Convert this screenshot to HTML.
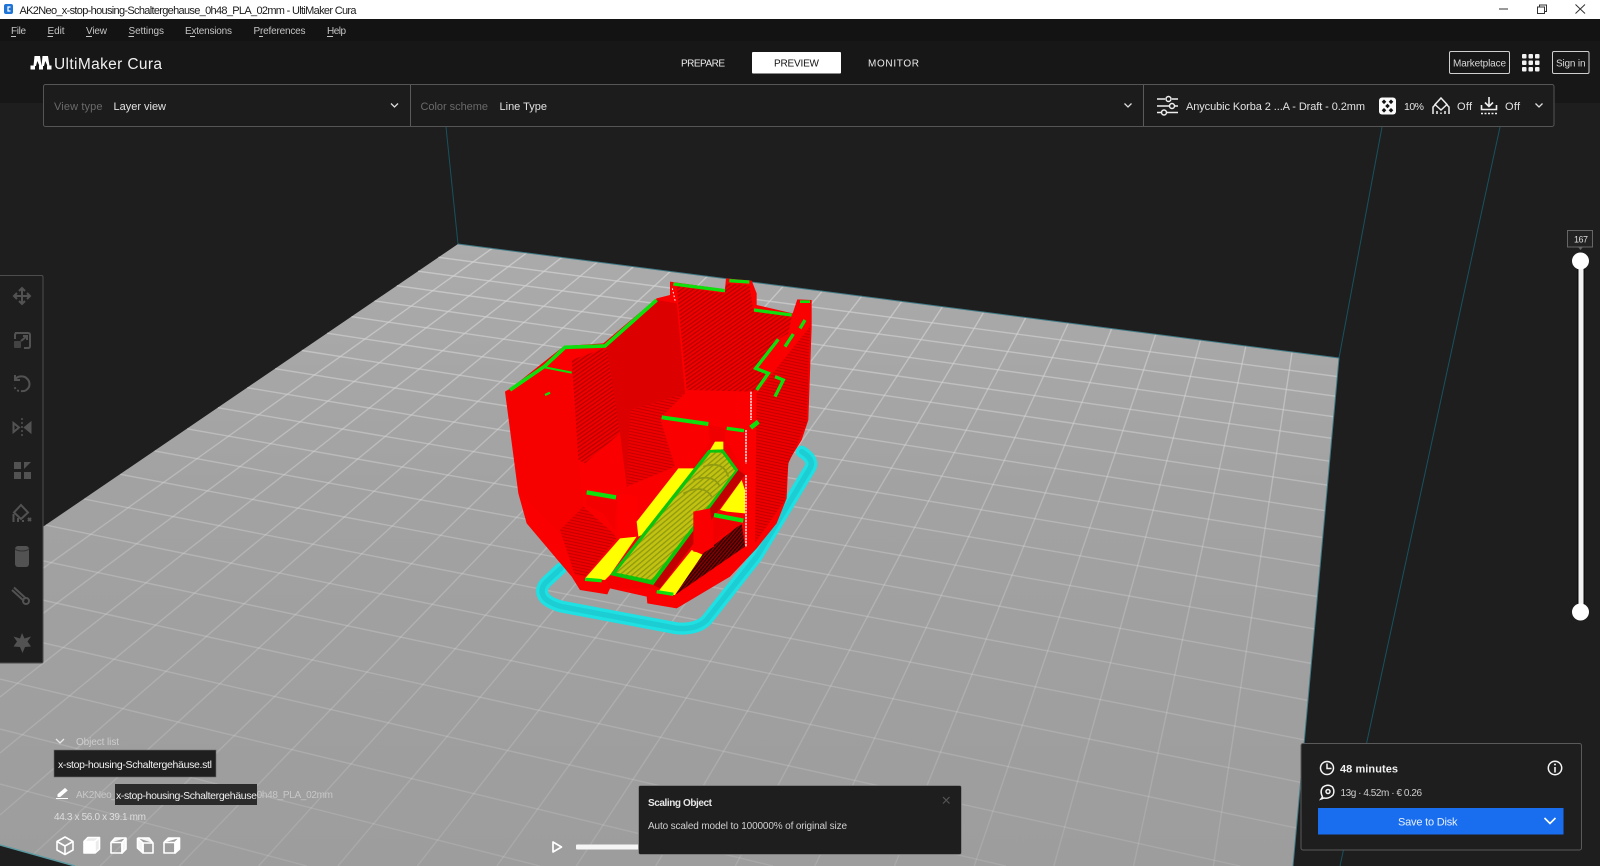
<!DOCTYPE html>
<html lang="en">
<head>
<meta charset="utf-8">
<title>UltiMaker Cura</title>
<style>
html,body{margin:0;padding:0;background:#1e1e1e;width:1600px;height:866px;overflow:hidden}
#wrap{position:absolute;left:0;top:0;width:1600px;height:866px;overflow:hidden;background:#1e1e1e}
#wrap svg{position:absolute;left:0;top:0;display:block}
text{font-family:"Liberation Sans",Arial,sans-serif;}
</style>
</head>
<body>
<div id="wrap">
<svg width="1600" height="866" viewBox="0 0 1600 866" xmlns="http://www.w3.org/2000/svg">
<defs>
<linearGradient id="pl" gradientUnits="userSpaceOnUse" x1="0" y1="244" x2="0" y2="866">
<stop offset="0" stop-color="#ababab"/><stop offset=".4" stop-color="#a2a2a2"/><stop offset="1" stop-color="#9d9d9d"/></linearGradient>
<linearGradient id="gr" gradientUnits="userSpaceOnUse" x1="0" y1="244" x2="0" y2="866">
<stop offset="0" stop-color="#d2d2d2" stop-opacity=".75"/><stop offset=".5" stop-color="#d2d2d2" stop-opacity=".38"/><stop offset="1" stop-color="#d2d2d2" stop-opacity=".2"/></linearGradient>
<pattern id="h1" width="10" height="10" patternUnits="userSpaceOnUse" patternTransform="rotate(-35)">
<rect width="10" height="10" fill="#f20000"/><rect width="10" height="4" fill="#b80000"/></pattern>
<pattern id="h2" width="9" height="9" patternUnits="userSpaceOnUse" patternTransform="rotate(12)">
<rect width="9" height="9" fill="#ee0000"/><rect width="9" height="3" fill="#c40000"/></pattern>
<pattern id="h3" width="8" height="8" patternUnits="userSpaceOnUse" patternTransform="rotate(-50)">
<rect width="8" height="8" fill="#8a0000"/><rect width="8" height="4" fill="#2a0000"/></pattern>
<pattern id="h4" width="12" height="12" patternUnits="userSpaceOnUse" patternTransform="rotate(-40)">
<rect width="12" height="12" fill="#c2c210"/><rect width="12" height="4" fill="#8f9a10"/></pattern>
</defs>

<!-- plate -->
<polygon points="458,244 1339,358 1293,866 75,866 0,845 0,556" fill="url(#pl)"/>
<g fill="none" stroke="url(#gr)" stroke-width="1.400">
<path d="M492.100 248.400L0 599M526.700 252.900L0 645.500M561.800 257.400L0 697M597.400 262L0 753M633.500 266.700L0 815M670.200 271.500L33.400 854.400M707.400 276.300L100 866M745.100 281.100L179.300 866M783.400 286.100L258.600 866M822.300 291.100L337.900 866M861.700 296.200L417.300 866M901.800 301.400L496.800 866M942.500 306.700L576.300 866M983.800 312L655.700 866M1025.800 317.500L735.300 866M1068.400 323L814.900 866M1111.700 328.600L894.500 866M1155.800 334.300L974.200 866M1200.500 340.100L1053.900 866M1245.900 345.900L1133.600 866M1292.100 351.900L1213.400 866"/>
<path d="M438.400 257.300L1337.400 376.600M418.100 271.200L1335.600 396.200M396.800 285.700L1333.700 416.700M374.600 300.900L1331.800 438.300M351.500 316.700L1329.700 461.200M327.200 333.200L1327.600 485.200M301.800 350.500L1325.300 510.700M275.200 368.700L1322.800 537.600M247.300 387.700L1320.200 566.200M217.900 407.700L1317.500 596.600M187.100 428.800L1314.600 628.900M154.600 450.900L1311.500 663.500M120.300 474.300L1308.100 700.400M84.100 499L1304.600 739.900M45.800 525.100L1300.800 782.400M5.300 552.800L1296.600 828.100M0 590.600L1240 866M0 632.800L1006 866M0 679L773 866M0 729L540 866M0 784L307 866"/>
</g>

<!-- build volume lines -->
<g stroke="#17525f" stroke-width="1" fill="none">
<path d="M446 127L458 244"/><path d="M1382 127L1339 358"/><path d="M1500 127L1340 866"/>
<path d="M458 244L1339 358" stroke="#3f7a86"/><path d="M1339 358L1293 866" stroke="#3f7a86"/>
<path d="M0 845L75 866" stroke="#5d9aa2" stroke-width="1.500"/>
</g>

<!-- model -->
<g transform="translate(490 260) scale(.33333)">
<g fill="none" stroke-linecap="round" stroke-linejoin="round">
<path d="M213 925L170 965Q145 990 165 1015Q180 1030 215 1040L560 1105Q620 1110 650 1080L800 890L960 625Q975 600 935 575" stroke="#1fe0e2" stroke-width="36"/>
<path d="M213 925L170 965Q145 990 165 1015Q180 1030 215 1040L560 1105Q620 1110 650 1080L800 890L960 625Q975 600 935 575" stroke="#18b8c0" stroke-width="16" opacity=".45"/>
</g>
<polygon fill="#fa0000" points="45,395 62,385 222,258 340,250 500,115 540,105 540,65 705,88 708,55 785,62 800,100 800,135 908,160 922,118 965,120 965,200 955,480 935,540 895,605 890,715 860,790 800,865 720,950 560,1045 472,1030 470,1010 360,985 352,1003 270,990 245,950 110,790 85,700"/>
<polygon fill="#dc0000" points="345,262 500,120 560,130 585,400 515,470 555,620 410,680 390,520"/>
<polygon fill="url(#h2)" points="420,450 585,400 515,470 555,620 410,680"/>
<polygon fill="url(#h1)" points="245,300 350,262 390,520 285,610 265,600"/>
<polygon fill="url(#h1)" points="560,78 700,100 710,70 778,75 790,150 905,170 895,220 860,240 800,320 840,340 790,395 590,390 565,130"/>
<polygon fill="url(#h2)" points="800,400 960,200 950,490 895,610 885,720 795,850"/>
<polygon fill="#f60000" points="50,400 160,325 240,345 265,600 280,740 210,820 90,700"/>
<polygon fill="#fa0000" points="285,610 390,520 410,680 375,815 280,740"/>
<polygon fill="url(#h2)" points="210,810 280,740 370,820 380,835 285,950 255,945"/>
<polygon fill="#fa0000" points="510,475 655,495 660,545 600,625 555,620"/>
<polygon fill="#fa0000" points="705,505 770,510 768,650 745,625 705,545"/>
<polygon fill="#f00000" points="655,495 705,505 705,545 660,545"/>
<polygon fill="#f40000" points="290,695 380,715 375,815 340,760 290,735"/>
<polygon fill="#ff0000" points="385,700 440,710 442,825 385,838"/>
<polygon fill="#f40000" points="440,830 605,630 660,545 710,545 765,640 510,985 360,985 345,960"/>
<polygon fill="#ffff00" points="285,955 390,835 440,830 360,945 345,960"/>
<polygon fill="#ffff00" points="440,785 565,625 612,625 455,825 445,830"/>
<polygon fill="#ffff00" points="660,570 675,545 700,545 700,568"/>
<polygon fill="#0bc40b" points="360,945 655,570 700,568 745,630 490,975"/>
<polygon fill="url(#h4)" points="378,938 662,578 695,578 735,632 485,960"/>
<path d="M640 620Q700 600 715 650M610 660Q670 640 690 680M580 700Q640 670 665 710" fill="none" stroke="#8f9a10" stroke-width="5"/>
<polygon fill="#c20000" points="490,975 745,630 765,645 510,985"/>
<polygon fill="#ffff00" points="500,1000 605,870 640,885 555,1005"/>
<polygon fill="#ffff00" points="690,750 755,660 765,690 765,760 710,755"/>
<polygon fill="url(#h3)" points="640,880 755,790 765,860 555,1005"/>
<polygon fill="#fa0000" points="610,755 660,745 672,860 640,878 610,875"/>
<polygon fill="#f00000" points="670,770 760,790 690,830 672,850"/>
<g fill="none" stroke="#0ee00e" stroke-linecap="butt" stroke-linejoin="miter">
<path stroke-width="11" d="M60 390L165 318L225 262L345 258L500 120"/>
<path stroke-width="6" d="M165 322L245 338"/>
<path stroke-width="7" d="M165 405L180 398"/>
<path stroke-width="10" d="M550 72L705 92"/>
<path stroke-width="10" d="M718 62L778 66"/>
<path stroke-width="10" d="M792 150L905 165"/>
<path stroke-width="8" d="M930 125L960 125"/>
<path stroke-width="10" d="M930 205L945 180"/>
<path stroke-width="10" d="M885 260L910 222"/>
<path stroke-width="10" d="M865 238L797 325L835 340L800 390"/>
<path stroke-width="10" d="M855 350L880 360L855 410"/>
<path stroke-width="12" d="M515 472L655 492"/>
<path stroke-width="10" d="M710 505L762 512"/>
<path stroke-width="14" d="M782 503L805 485"/>
<path stroke-width="13" d="M290 697L378 712"/>
<path stroke-width="13" d="M672 765L760 782"/>
<path stroke-width="10" d="M285 958L335 962"/>
<path stroke-width="10" d="M500 995L550 1003"/>
</g>
<g fill="none" stroke="#fff" stroke-width="4" stroke-dasharray="7 2">
<path d="M783 395V480"/><path d="M768 510V610"/><path d="M768 645V860"/><path d="M547 85L556 125" stroke-width="3" stroke-dasharray="5 6"/>
</g>
</g>

<!-- top chrome -->
<rect x="0" y="19" width="1600" height="22" fill="#131313"/>
<rect x="0" y="41" width="1600" height="62" fill="#171717"/>
<rect x="0" y="0" width="1600" height="19" fill="#fff"/>
<rect x="4" y="4" width="9" height="10" rx="2" fill="#1f74d8"/>
<path d="M10.500 7H8V11H10.500" fill="none" stroke="#fff" stroke-width="1.300"/>
<text x="19.500" y="14" font-size="11" fill="#1a1a1a" textLength="337">AK2Neo_x-stop-housing-Schaltergehause_0h48_PLA_02mm - UltiMaker Cura</text>
<g fill="none" stroke="#333" stroke-width="1">
<path d="M1499 9H1508"/>
<rect x="1537.500" y="7" width="7" height="6.500"/><path d="M1539.500 7V5H1546.500V11.500H1544.500"/>
<path d="M1575.500 4.500L1585 13.500M1585 4.500L1575.500 13.500"/>
</g>

<!-- menu -->
<g font-size="10" fill="#c4c4c4">
<text x="11" y="34" textLength="15">File</text>
<text x="47.500" y="34" textLength="17">Edit</text>
<text x="86" y="34" textLength="21">View</text>
<text x="128.500" y="34" textLength="35.500">Settings</text>
<text x="185" y="34" textLength="47">Extensions</text>
<text x="253.500" y="34" textLength="52">Preferences</text>
<text x="327" y="34" textLength="19">Help</text>
</g>
<g stroke="#c4c4c4" stroke-width="1"><path d="M11 36.500H16M47.500 36.500H53M86 36.500H92M128.500 36.500H134M190 36.500H195M259 36.500H263M327 36.500H333"/></g>

<!-- logo -->
<g fill="#fff">
<rect x="30.500" y="65.500" width="4.500" height="4"/>
<rect x="39" y="65.500" width="4" height="4"/>
<rect x="47" y="65.500" width="4.500" height="4"/>
<path d="M34.500 56H40L41.500 66H39.500L37.300 61L36 66H33.500Z"/>
<path d="M42.500 56H48L49.500 66H47.500L45.300 61L44 66H41.500Z"/>
</g>
<text x="54" y="69" font-size="15.500" fill="#f0f0f0" textLength="108">UltiMaker Cura</text>

<!-- tabs -->
<text x="681" y="66.500" font-size="10" fill="#ececec" textLength="44">PREPARE</text>
<rect x="752" y="52" width="89" height="21.500" rx="1" fill="#fff"/>
<text x="774" y="66.500" font-size="10" fill="#111" textLength="45">PREVIEW</text>
<text x="868" y="66.500" font-size="10" fill="#ececec" textLength="51">MONITOR</text>

<!-- right top -->
<rect x="1449.500" y="51.500" width="60" height="22" rx="1.500" fill="none" stroke="#cfcfcf"/>
<text x="1453" y="66.500" font-size="10" fill="#d8d8d8" textLength="53">Marketplace</text>
<g fill="#f2f2f2">
<rect x="1522" y="54" width="4.500" height="4.500" rx="1"/><rect x="1528.500" y="54" width="4.500" height="4.500" rx="1"/><rect x="1535" y="54" width="4.500" height="4.500" rx="1"/>
<rect x="1522" y="60.500" width="4.500" height="4.500" rx="1"/><rect x="1528.500" y="60.500" width="4.500" height="4.500" rx="1"/><rect x="1535" y="60.500" width="4.500" height="4.500" rx="1"/>
<rect x="1522" y="67" width="4.500" height="4.500" rx="1"/><rect x="1528.500" y="67" width="4.500" height="4.500" rx="1"/><rect x="1535" y="67" width="4.500" height="4.500" rx="1"/>
</g>
<rect x="1552.500" y="51.500" width="36.500" height="22" rx="1.500" fill="none" stroke="#cfcfcf"/>
<text x="1556" y="66.500" font-size="10" fill="#d8d8d8" textLength="29.500">Sign in</text>

<!-- config bar -->
<rect x="43.500" y="84.500" width="1510.500" height="42" rx="2" fill="#1c1c1c" stroke="#555"/>
<path d="M410.500 85V126M1143.500 85V126" stroke="#5a5a5a"/>
<text x="54" y="110" font-size="11" fill="#6a6a6a" textLength="48.500">View type</text>
<text x="113.500" y="110" font-size="11" fill="#e2e2e2" textLength="52.500">Layer view</text>
<text x="420.500" y="110" font-size="11" fill="#6a6a6a" textLength="67.500">Color scheme</text>
<text x="499.500" y="110" font-size="11" fill="#e2e2e2" textLength="47.500">Line Type</text>
<g fill="none" stroke="#ddd" stroke-width="1.300">
<path d="M391 103.500L394.500 107L398 103.500"/>
<path d="M1124.500 103.500L1128 107L1131.500 103.500"/>
<path d="M1535.500 103.500L1539 107L1542.500 103.500"/>
</g>
<g fill="none" stroke="#eee" stroke-width="1.500">
<path d="M1157 99H1165M1172 99H1178M1157 106H1169M1175 106H1178M1157 112.500H1161M1167 112.500H1178"/>
<circle cx="1168.500" cy="99" r="2.500"/><circle cx="1172" cy="106" r="2.500"/><circle cx="1164" cy="112.500" r="2.500"/>
</g>
<text x="1186" y="110" font-size="11" fill="#e2e2e2" textLength="179">Anycubic Korba 2 ...A - Draft - 0.2mm</text>
<rect x="1379" y="97.500" width="17" height="17" rx="3" fill="#fafafa"/>
<g fill="#111">
<path d="M1384 99.500l2.300 2.300-2.300 2.300-2.300-2.300z"/><path d="M1391 99.500l2.300 2.300-2.300 2.300-2.300-2.300z"/>
<path d="M1387.500 103.700l2.300 2.300-2.300 2.300-2.300-2.300z"/>
<path d="M1384 108l2.300 2.300-2.300 2.300-2.300-2.300z"/><path d="M1391 108l2.300 2.300-2.300 2.300-2.300-2.300z"/>
</g>
<text x="1404" y="110" font-size="10.500" fill="#e2e2e2" textLength="20">10%</text>
<g fill="none" stroke="#eee" stroke-width="1.500">
<path d="M1441 98L1447 104.500L1441 110L1435 104.500Z"/>
<path d="M1433 114V107L1436 104M1449 114V107L1446 104M1437 114V111M1441 114V112.500M1445 114V111"/>
</g>
<text x="1457" y="110" font-size="11" fill="#e2e2e2" textLength="15">Off</text>
<g fill="none" stroke="#eee" stroke-width="1.600">
<path d="M1489 97V106M1485 102.500L1489 106.500L1493 102.500"/>
<path d="M1481.500 105V109.500H1496.500V105"/>
<path d="M1481 113.500H1497" stroke-dasharray="2 1.500"/>
</g>
<text x="1505" y="110" font-size="11" fill="#e2e2e2" textLength="15">Off</text>

<!-- left toolbar -->
<rect x="0" y="275.500" width="43" height="387.500" fill="#1e1e1e"/>
<path d="M0 275.500H41.500Q43 275.500 43 277V661.500Q43 663 41.500 663H0" fill="none" stroke="#4d4d4d"/>
<g fill="none" stroke="#525252" stroke-width="2">
<path d="M22 288V304M14 296H30M19 291L22 288L25 291M19 301L22 304L25 301M17 293L14 296L17 299M27 293L30 296L27 299"/>
<path d="M15 333H28Q30 333 30 335V346Q30 348 28 348H24"/>
<rect x="14" y="341" width="7" height="7" rx="1" fill="#525252" stroke="none" opacity=".7"/>
<path d="M15 339V335Q15 333 17 333M21 341L27 336M23 336H27V340"/>
<path d="M15 379Q19 375 25 377Q31 381 29 387Q26 392 21 391"/><path d="M15 375V380H20"/><path d="M19 391Q15 390 14 385" stroke-dasharray="2 2"/>
<path d="M22 418V436" stroke-dasharray="2 2" stroke-width="1.500"/>
<path d="M13.500 423V432L19 427.500Z"/>
<path d="M30.500 423V432L25 427.500Z" fill="#525252"/>
</g>
<g fill="#525252">
<rect x="14" y="462" width="7" height="7"/><path d="M24 462h7l-7 7z"/><rect x="14" y="472" width="7" height="7"/><rect x="24" y="472" width="7" height="7"/>
<rect x="15" y="546" width="14" height="21" rx="3"/>
<path d="M22 633l2.500 5.500 6.500-2-3.500 5 3.500 5-6 .5-2.500 6-2.500-6-6.500-.5 3.500-5-3.500-5 6.500 2z"/>
</g>
<g fill="none" stroke="#525252" stroke-width="2">
<path d="M21 505L28 512.500L21 519L14 512.500Z"/>
<path d="M13.500 522V514M18 522V518M23 522V520M28 521L31 518M31 521L28 518"/>
<path d="M12 590L24 601M14 587.500L26 598.500"/><circle cx="26" cy="601" r="3"/>
</g>
<path d="M15 548.500A7 2.500 0 0 0 29 548.500" stroke="#333" fill="none"/>

<!-- layer slider -->
<rect x="1567.500" y="230.500" width="25" height="16.500" fill="#222" stroke="#666"/>
<path d="M1578 247L1580.500 250L1583 247Z" fill="#666"/>
<text x="1574" y="242.500" font-size="9" fill="#ddd" textLength="14">167</text>
<rect x="1577" y="265" width="8" height="345" fill="#111"/>
<rect x="1578.500" y="261" width="5" height="350" fill="#f2f2f2"/>
<circle cx="1580.500" cy="261" r="8.500" fill="#fff"/>
<circle cx="1580.500" cy="612" r="8.500" fill="#fff"/>

<!-- object list -->
<path d="M56 739L60 743L64 739" fill="none" stroke="#e8e8e8" stroke-width="1.300"/>
<text x="76" y="745" font-size="10" fill="#cdcdcd" textLength="43">Object list</text>
<rect x="54" y="750" width="162" height="27" fill="#1f1f1f" stroke="#6a6a6a" stroke-width=".6"/>
<text x="58" y="768" font-size="10.500" fill="#f2f2f2" textLength="154">x-stop-housing-Schaltergehäuse.stl</text>
<path d="M56 798.500H68M58 794.500L65 788.500L67 790.500L60 796.500H58Z" fill="#fff" stroke="#fff" stroke-width="1"/>
<text x="76" y="798" font-size="10" fill="#c8c8c8" textLength="257">AK2Neo_x-stop-housing-Schaltergehäuse_0h48_PLA_02mm</text>
<rect x="115" y="784" width="142" height="21" fill="#2b2b2b"/>
<text x="116" y="799" font-size="10.500" fill="#f0f0f0" textLength="141">x-stop-housing-Schaltergehäuse</text>
<text x="54" y="820" font-size="10" fill="#dedede" textLength="92">44.3 x 56.0 x 39.1 mm</text>
<g fill="none" stroke="#fff" stroke-width="1.600" stroke-linejoin="round">
<path d="M65 837L73 841.500V850L65 854.500L57 850V841.500ZM57 841.500L65 846L73 841.500M65 846V854.500"/>
<path d="M84 841.500H95V853H84Z" fill="#fff"/><path d="M84 841.500L88 837.500H99.500V849L95 853M95 841.500L99.500 837.500" fill="#fff" fill-opacity=".8"/>
<path d="M111 842.500H122V853H111Z"/><path d="M111 842.500L115 838H126V849L122 853V842.500L126 838" fill="#fff" fill-opacity=".9"/>
<path d="M143 843H153V853H143Z"/><path d="M137.500 838H149L153 843M137.500 838V848L143 853M137.500 838L143 843V853" fill="#fff" fill-opacity=".9"/>
<path d="M164 842.500H175V853H164Z"/><path d="M164 842.500L168.500 838H179.500V849L175 853V842.500L179.500 838" fill="#fff"/>
</g>

<!-- play + bar -->
<path d="M553 842V852L561.500 847Z" fill="none" stroke="#fff" stroke-width="1.700" stroke-linejoin="round"/>
<rect x="576" y="844.500" width="66" height="5" rx="1" fill="#f6f6f6"/>

<!-- message -->
<rect x="638.500" y="785.500" width="323" height="69" rx="2" fill="#1e1e1e" stroke="#8a8a8a" stroke-width=".8"/>
<text x="648" y="806" font-size="10" font-weight="bold" fill="#e6e6e6" textLength="64">Scaling Object</text>
<text x="648" y="829" font-size="10" fill="#d0d0d0" textLength="199">Auto scaled model to 100000% of original size</text>
<path d="M943 797L949.500 803.500M949.500 797L943 803.500" stroke="#555" stroke-width="1.200"/>

<!-- action panel -->
<rect x="1301" y="743.500" width="280.500" height="106.500" rx="2" fill="#1e1e1e" stroke="#5a5a5a"/>
<g fill="none" stroke="#f4f4f4" stroke-width="1.500">
<circle cx="1327" cy="768" r="6.500"/><path d="M1327 763.500V768.500H1331.500"/>
<circle cx="1555" cy="768" r="6.700"/><path d="M1555 767V772.500" stroke-width="1.600"/>
<path d="M1322.500 797Q1319.500 791 1323 787Q1328 783.500 1332.500 787Q1335 791 1333 795Q1329 799 1324 798L1321 799Z"/>
<circle cx="1328" cy="791.500" r="2"/>
</g>
<circle cx="1555" cy="764.500" r="1" fill="#f4f4f4"/>
<text x="1340" y="772.500" font-size="11" font-weight="bold" fill="#f0f0f0" textLength="58">48 minutes</text>
<text x="1340.500" y="796" font-size="10" fill="#cdcdcd" textLength="81.500">13g · 4.52m · € 0.26</text>
<rect x="1318" y="808" width="245.500" height="26.500" fill="#196ef0"/>
<text x="1398" y="825.500" font-size="11" fill="#e8f0ff" textLength="59.500">Save to Disk</text>
<path d="M1544.500 818L1550 823.500L1555.500 818" fill="none" stroke="#fff" stroke-width="1.600"/>
</svg>
</div>
</body>
</html>
